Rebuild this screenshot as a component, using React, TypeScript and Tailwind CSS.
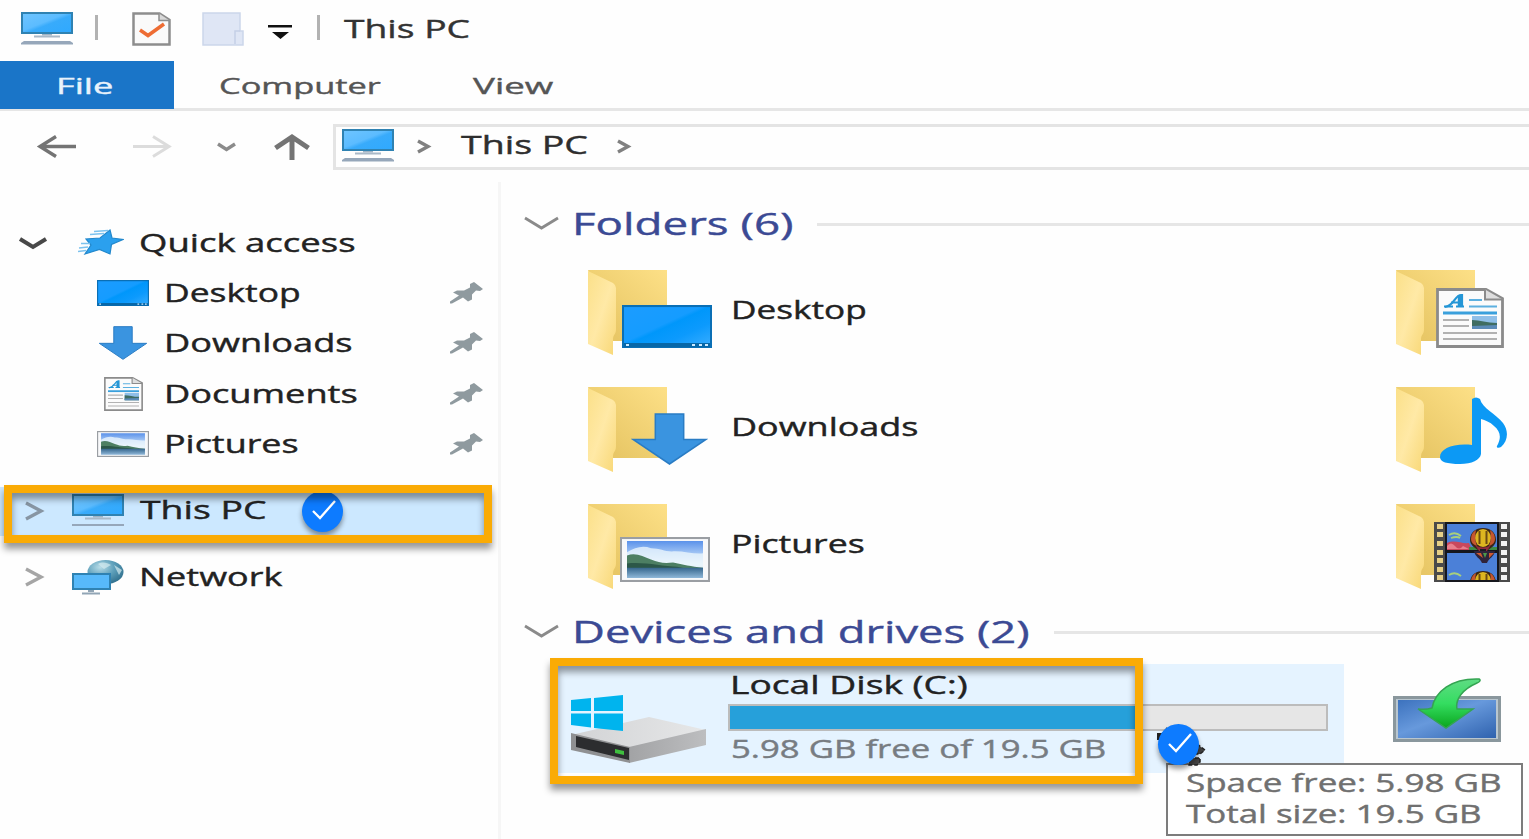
import { useLayoutEffect, useRef, type ReactNode } from "react";

type LabelProps = { text: string; width: number; className?: string };

/** Single line of wide-set text, stretched horizontally to fill its width. */
function Label({ text, width, className = "" }: LabelProps) {
  const ref = useRef<HTMLSpanElement>(null);
  useLayoutEffect(() => {
    const el = ref.current;
    if (!el) return;
    el.style.transform = `scaleX(${width / el.offsetWidth})`;
  }, [text, width]);
  return (
    <span className={`flex shrink-0 ${className}`} style={{ width }}>
      <span ref={ref} className="shrink-0 origin-left whitespace-nowrap [-webkit-text-stroke:0.4px]">
        {text}
      </span>
    </span>
  );
}

function MonitorIcon({ className = "", flat = false }: { className?: string; flat?: boolean }) {
  return (
    <svg viewBox="0 0 52 33" className={`h-[33px] w-[52px] shrink-0 ${className}`}>
      <defs>
        <linearGradient id="screen" x1="0" y1="0" x2="1" y2="1">
          <stop offset="0" stopColor="#6fc5ff" />
          <stop offset="0.45" stopColor="#5cbcff" />
          <stop offset="0.55" stopColor="#38abfb" />
          <stop offset="1" stopColor="#2fa9ff" />
        </linearGradient>
      </defs>
      <rect x="1" y="1" width="50" height="20" fill="url(#screen)" stroke="#2f82b2" strokeWidth="2" />
      <path d="M21 22h10v1.500H21z" fill="#9fb3c4" />
      <path d="M13 23.500h26v2H13z" fill="#a9b9c8" />
      <path d={flat ? "M0 30h52v2H0z" : "M3 29h46l3 2v1.500H0V31z"} fill="#96a7ba" />
    </svg>
  );
}

function DesktopIcon({ className }: { className: string }) {
  return (
    <svg viewBox="0 0 90 42" preserveAspectRatio="none" className={className}>
      <defs>
        <linearGradient id="desk" x1="0" y1="0" x2="1" y2="1">
          <stop offset="0" stopColor="#1c9cff" />
          <stop offset="0.45" stopColor="#159cff" />
          <stop offset="0.5" stopColor="#0097fb" />
          <stop offset="0.7" stopColor="#0c9afd" />
          <stop offset="1" stopColor="#3aaeff" />
        </linearGradient>
      </defs>
      <rect x="1" y="1" width="88" height="40" fill="url(#desk)" stroke="#0a6fb5" strokeWidth="2" />
      <path d="M2 37h86v4H2z" fill="#0767a8" />
      <path d="M4 38h3v2H4zM70 38h3v2h-3zM77 38h3v2h-3zM83 38h3v2h-3z" fill="#cdeaff" />
    </svg>
  );
}

function DownArrow({ className }: { className: string }) {
  return (
    <svg viewBox="0 0 76 51" preserveAspectRatio="none" className={className}>
      <path d="M24 1h28v25h22L38 50 2 26h22z" fill="#3a94e0" stroke="#2a7cc4" strokeWidth="1.500" />
    </svg>
  );
}

function DocumentIcon({ className }: { className: string }) {
  return (
    <svg viewBox="0 0 68 60" preserveAspectRatio="none" className={className}>
      <path d="M1.500 1.500H50l16.500 9V58.500h-65z" fill="#fbfbfb" stroke="#8b8b8b" strokeWidth="2.800" />
      <path d="M49 1.500v10h17.500" fill="#dedede" stroke="#8b8b8b" strokeWidth="2" />
      <path d="M9 19c9-1 10-12 16-12h1v11" fill="none" stroke="#2496d6" strokeWidth="2.200" />
      <path d="M24 7v11" stroke="#2496d6" strokeWidth="4.500" />
      <path d="M15 14.500h10M8 18.500h9M20 18.500h8" fill="none" stroke="#2496d6" strokeWidth="2" />
      <path d="M33 12h13M33 18.500h28" stroke="#5cb0e0" strokeWidth="2" />
      <path d="M7 25h54" stroke="#3aa0dc" strokeWidth="3.200" />
      <path d="M7 32h26M7 38h26M7 45h54M7 51h54" stroke="#b2b2b2" strokeWidth="1.800" />
      <path d="M36 28h25v13H36z" fill="#8fbfe8" />
      <path d="M36 32c8 0 15 3 25 3v6H36z" fill="#3f6d62" />
      <path d="M36 38l25-1v4H36z" fill="#5b8bb8" />
    </svg>
  );
}

function PictureIcon({ className }: { className: string }) {
  return (
    <svg viewBox="0 0 90 44" preserveAspectRatio="none" className={className}>
      <defs>
        <linearGradient id="sky" x1="0" y1="0" x2="0" y2="1">
          <stop offset="0" stopColor="#5b92ea" />
          <stop offset="0.35" stopColor="#a6c8f5" />
          <stop offset="0.6" stopColor="#e6f2fb" />
        </linearGradient>
        <linearGradient id="lake" x1="0" y1="0" x2="0" y2="1">
          <stop offset="0" stopColor="#35658c" />
          <stop offset="1" stopColor="#8fb7d8" />
        </linearGradient>
      </defs>
      <rect x="1" y="1" width="88" height="42" fill="#f7f8fa" stroke="#9a9ea3" strokeWidth="2" />
      <path d="M7 4h76v36H7z" fill="url(#sky)" />
      <path d="M7 15c8-5 16-7 24-4 10 0 14 4 24 3 10 0 20 3 28 2v12H7z" fill="#eaf5fc" opacity="0.8" />
      <path d="M7 18c9-3 16 1 24 4s12 4 22 3c10 2 18 4 30 5v2H7z" fill="#4d7f63" />
      <path d="M7 26c16-2 36 3 50 3l10 2H7z" fill="#2c5748" />
      <path d="M7 30h76v10H7z" fill="url(#lake)" />
    </svg>
  );
}

function MusicIcon({ className }: { className: string }) {
  return (
    <svg viewBox="0 0 68 68" className={className}>
      <path
        d="M32 2q4-3 8 0c2 9 16 15 23 24 6 8 5 18-2 24-2 1-5 1-4-1 5-9 3-15-3-20-4-4-9-6-13-7v35c-1 6-9 10-21 10C7 67 0 65 0 60c0-8 13-14 32-12z"
        fill="#0c99f5"
      />
    </svg>
  );
}

function Balloon({ x, y }: { x: number; y: number }) {
  return (
    <g transform={`translate(${x} ${y})`}>
      <path d="M-13 6c0-8 6-12 13-12s13 4 13 12c0 5-5 8-8 10H-5c-3-2-8-5-8-10z" fill="#3a2516" />
      <ellipse cx="0" cy="4" rx="8" ry="9" fill="#dcb520" />
      <path d="M-12 5q0-6 5-9-2 9 1 16-6-2-6-7zM12 5q0-6-5-9 2 9-1 16 6-2 6-7z" fill="#c4562f" />
      <path d="M-3.500-3v13M3.500-3v13" stroke="#6b4a12" strokeWidth="2" fill="none" />
      <path d="M-8 11q8 5 16 0l-4 6h-8z" fill="#8e2b3b" />
      <path d="M-3 15h6v5h-6z" fill="#1c1a22" />
    </g>
  );
}

function FilmIcon({ className }: { className: string }) {
  return (
    <svg viewBox="0 0 76 60" className={className}>
      <path d="M0 0h76v60H0z" fill="#4a4a4a" />
      <path d="M11 0h54v60H11z" fill="#15171d" />
      <path d="M13 2h50v26H13zM13 31h50v27H13z" fill="#4b80d8" />
      <path d="M13 21c8-4 14 1 22 0l3 7H13z" fill="#c9485c" />
      <path d="M13 24q4-5 8 0t8 0l6 3H13z" fill="#e87f8c" />
      <path d="M35 25h28v3H35z" fill="#3c8a45" />
      <path d="M15 13q6-4 12 1M17 16q6-2 9 0M15 53q6-4 12 1" stroke="#a8cf7c" strokeWidth="1.800" fill="none" />
      <Balloon x={49} y={12} />
      <path d="M40 29h21c-1 6-6 7-8 12h-5c-2-5-7-6-8-12z" fill="#30243a" />
      <path d="M42 31h5l2 5zM55 31h5l-5 5z" fill="#cf5a2f" />
      <path d="M49 31h4l-2 5z" fill="#4c9a4a" />
      <svg x="13" y="31" width="50" height="27" viewBox="13 31 50 27">
        <Balloon x={49} y={55} />
      </svg>
      {[2, 10, 19, 28, 36, 45, 53].map((y) => (
        <g key={y}>
          <path d={`M3 ${y}h6v5H3z`} fill="#e6cf86" />
          <path d={`M67 ${y}h6v5h-6z`} fill="#f2f2f2" />
        </g>
      ))}
    </svg>
  );
}

function Folder({ children }: { children: ReactNode }) {
  return (
    <div className="relative h-[86px] w-[126px] shrink-0">
      <svg viewBox="0 0 126 86" className="h-full w-full">
        <defs>
          <linearGradient id="back" x1="0" y1="1" x2="1" y2="0">
            <stop offset="0.2" stopColor="#e8c766" />
            <stop offset="1" stopColor="#fde087" />
          </linearGradient>
          <linearGradient id="flap" x1="0" y1="0" x2="1" y2="1">
            <stop offset="0" stopColor="#fbe089" />
            <stop offset="0.5" stopColor="#ffe9a6" />
            <stop offset="1" stopColor="#f8d775" />
          </linearGradient>
        </defs>
        <path d="M0 0h79v71H24z" fill="url(#back)" />
        <path d="M0 1l25 12q3 2 3 5v41c0 6-3 5-3 11v15L0 74z" fill="url(#flap)" />
      </svg>
      {children}
    </div>
  );
}

function StarIcon() {
  return (
    <svg viewBox="0 0 46 28" className="h-[28px] w-[46px] shrink-0">
      <path d="M32 1L34 9 45 10.500 33.500 15.500 32 25 21.500 20.500 7 25 13 16 8 10 22 9z" fill="#2ba0ee" stroke="#2388cc" strokeWidth="1.200" />
      <path d="M16 2.500l14-1M12 5.500l14-1M3 14.500h9M1 19l9-1M0 22.500l8-1" stroke="#7cc2ee" strokeWidth="1.400" />
    </svg>
  );
}

function PinIcon() {
  return (
    <svg viewBox="0 0 33 22" className="h-[22px] w-[33px] shrink-0">
      <path d="M20 2l4-2 9 7-3 2-4-.500-4 4v5l-4 2-5-4-11 6H0v-2l9-6-6-3 4-2h7l6-3z" fill="#8f9a9f" />
    </svg>
  );
}

function NetworkIcon() {
  return (
    <svg viewBox="0 0 52 35" className="h-[35px] w-[52px] shrink-0">
      <defs>
        <radialGradient id="globe" cx="0.35" cy="0.3" r="0.8">
          <stop offset="0" stopColor="#b9dde8" />
          <stop offset="0.5" stopColor="#5d9fba" />
          <stop offset="1" stopColor="#2b6a88" />
        </radialGradient>
      </defs>
      <ellipse cx="33.500" cy="12" rx="18" ry="12" fill="url(#globe)" />
      <path d="M26 4c5-3 9-1 13 1l-7 4zM42 5l8 5-3 5z" fill="#d4ebef" opacity="0.7" />
      <rect x="1" y="14" width="37" height="15" fill="#57b9fa" stroke="#2f82b2" strokeWidth="2" />
      <path d="M16 30h6v2h-6zM10 32.500h18v2H10z" fill="#91a5b5" />
    </svg>
  );
}

function DriveIcon() {
  return (
    <svg viewBox="0 0 136 70" className="h-[70px] w-[136px] shrink-0">
      <defs>
        <linearGradient id="top" x1="0" y1="0" x2="1" y2="0">
          <stop offset="0" stopColor="#d2d3d5" />
          <stop offset="1" stopColor="#e6e7e8" />
        </linearGradient>
        <linearGradient id="side" x1="0" y1="0" x2="1" y2="0">
          <stop offset="0" stopColor="#a2a3a5" />
          <stop offset="1" stopColor="#bdbec0" />
        </linearGradient>
      </defs>
      <path d="M0 40l78-18 57 13-75 22z" fill="url(#top)" />
      <path d="M58 52l77-18v16L58 68z" fill="url(#side)" />
      <path d="M0 38l59 14v16L0 55z" fill="#8f9092" />
      <path d="M5 41l53 12v12L5 52z" fill="#2c2d2f" />
      <path d="M44 54l9 2v4l-9-2z" fill="#3fbf3f" />
      <path d="M0 5l20-2v13H0zM23 3l29-3v16H23zM0 18.500h20v14L0 30zM23 18.500h29V36l-29-3z" fill="#00b4ee" />
    </svg>
  );
}

function InstallIcon() {
  return (
    <svg viewBox="0 0 108 64" className="h-[64px] w-[108px] shrink-0">
      <defs>
        <linearGradient id="panel" x1="0" y1="0" x2="1" y2="1">
          <stop offset="0" stopColor="#3c72be" />
          <stop offset="0.45" stopColor="#6799dc" />
          <stop offset="1" stopColor="#2f62ae" />
        </linearGradient>
        <linearGradient id="green" x1="0" y1="0" x2="0" y2="1">
          <stop offset="0" stopColor="#5fdc84" />
          <stop offset="0.5" stopColor="#34dd60" />
          <stop offset="1" stopColor="#0aa61e" />
        </linearGradient>
      </defs>
      <rect x="1.500" y="19.500" width="105" height="43" fill="#b9c6cf" stroke="#8a979d" strokeWidth="3" />
      <rect x="5" y="22" width="98" height="38" fill="url(#panel)" />
      <path d="M86 1c2 1 1 3-2 4-14 6-22 16-20 26h16L53 50 25 31q8 1 14-1C42 14 58 0 86 1z" fill="url(#green)" stroke="#35a452" strokeWidth="1.500" />
    </svg>
  );
}

function Chevron({ d, className, stroke, width }: { d: string; className: string; stroke: string; width: number }) {
  return (
    <svg className={`shrink-0 overflow-visible ${className}`} fill="none">
      <path d={d} stroke={stroke} strokeWidth={width} />
    </svg>
  );
}

function CheckBadge({ className }: { className: string }) {
  return (
    <div className={`absolute h-[41px] w-[41px] rounded-full bg-[#0d7bff] shadow-[0_4px_5px_rgba(0,0,0,0.4)] ${className}`}>
      <svg viewBox="0 0 41 41" className="h-full w-full" fill="none">
        <path d="M11 20l7 7 15-17" stroke="#fff" strokeWidth="2.300" />
      </svg>
    </div>
  );
}

function TitleBar() {
  return (
    <div className="flex h-[61px] shrink-0 items-start pt-[12px] pl-[21px]">
      <MonitorIcon />
      <div className="mt-[3px] ml-[22px] h-[25px] w-[3px] bg-[#b2b2b2]" />
      <svg viewBox="0 0 39 34" className="ml-[34px] h-[34px] w-[39px]">
        <path d="M1.500 1.500h26l10 6.500v24.500h-36z" fill="#fafafa" stroke="#8d8d8d" strokeWidth="2.500" />
        <path d="M27 1.500v7h10.500" fill="#d9d9d9" stroke="#8d8d8d" strokeWidth="1.500" />
        <path d="M8 18l8 5.500L32 12" fill="none" stroke="#ee6c33" strokeWidth="3.500" />
      </svg>
      <svg viewBox="0 0 42 34" className="ml-[31px] h-[34px] w-[42px]">
        <path d="M1 1h37v18h3v14H1z" fill="#dfe6f5" stroke="#ccd6ea" strokeWidth="1.500" />
        <path d="M38 19h-5v13" fill="none" stroke="#c5d0e6" strokeWidth="1.500" />
      </svg>
      <svg viewBox="0 0 24 14" className="mt-[13px] ml-[24px] h-[14px] w-[24px]">
        <path d="M0 0h24v2.500H0zM4 7h17l-8.500 7z" fill="#111" />
      </svg>
      <div className="mt-[3px] ml-[25px] h-[25px] w-[3px] bg-[#b2b2b2]" />
      <Label text="This PC" width={126} className="ml-[24px] text-[26px] leading-[33px] text-[#333]" />
    </div>
  );
}

function Tabs() {
  return (
    <div className="flex h-[50px] shrink-0 border-b-[3px] border-[#e6e6e6] text-[22.500px] leading-[49px] text-[#555]">
      <div className="-mb-px flex h-[48px] w-[174px] bg-[#1a75c8] pl-[56px] text-[#e8f2fb]">
        <Label text="File" width={58} />
      </div>
      <Label text="Computer" width={162} className="ml-[45px]" />
      <Label text="View" width={80} className="ml-[92px]" />
    </div>
  );
}

function AddressRow() {
  return (
    <div className="flex h-[71px] shrink-0 pt-[13px]">
      <div className="flex h-[46px] w-[333px] shrink-0 pl-[38px]">
        <Chevron d="M38 11.500H2M18 1.500L2 11.500L18 21.500" className="mt-[11px] h-[22px] w-[38px]" stroke="#747474" width={3.4} />
        <Chevron d="M0 11.500H36M20 1.500L36 11.500L20 21.500" className="mt-[11px] ml-[57px] h-[22px] w-[38px]" stroke="#dcdcdc" width={3} />
        <Chevron d="M1 1L9.500 6.500L18 1" className="mt-[19px] ml-[46px] h-[8px] w-[19px]" stroke="#8b8b8b" width={3.4} />
        <Chevron d="M18 26V3M1.500 14L18 3L34.500 14" className="mt-[10px] ml-[38px] h-[26px] w-[36px]" stroke="#747474" width={5} />
      </div>
      <div className="flex h-[46px] flex-1 border-y-[3px] border-l-[3px] border-[#e4e4e4] pt-[2px] pl-[6px]">
        <MonitorIcon />
        <Chevron d="M1 1L11 6.500L1 12" className="mt-[11px] ml-[23px] h-[13px] w-[12px]" stroke="#808080" width={3.4} />
        <Label text="This PC" width={127} className="ml-[32px] text-[26px] leading-[30px] text-[#2e2e2e]" />
        <Chevron d="M1 1L11 6.500L1 12" className="mt-[11px] ml-[29px] h-[13px] w-[12px]" stroke="#808080" width={3.4} />
      </div>
    </div>
  );
}

function PinnedRow({ icon, text, width }: { icon: ReactNode; text: string; width: number }) {
  return (
    <div className="flex h-[50.300px] items-center pl-[97px]">
      <div className="flex w-[52px] shrink-0 justify-center">{icon}</div>
      <Label text={text} width={width} className="mb-[2px] ml-[15px]" />
      <div className="mr-[15px] ml-auto flex">
        <PinIcon />
      </div>
    </div>
  );
}

function Sidebar() {
  return (
    <div className="relative w-[501px] shrink-0 border-r-[3px] border-[#f6f6f6] pt-[35.500px] text-[25px] leading-[34px] text-[#222]">
      <div className="flex h-[50.300px] items-center pl-[19px]">
        <Chevron d="M1 1L14 9L27 1" className="h-[10px] w-[28px]" stroke="#484848" width={4} />
        <div className="ml-[31px] flex">
          <StarIcon />
        </div>
        <Label text="Quick access" width={216} className="mb-[2px] ml-[15px]" />
      </div>
      <PinnedRow text="Desktop" width={136} icon={<DesktopIcon className="h-[26px] w-[52px]" />} />
      <PinnedRow text="Downloads" width={188} icon={<DownArrow className="h-[34px] w-[50px]" />} />
      <PinnedRow text="Documents" width={194} icon={<DocumentIcon className="h-[34px] w-[39px]" />} />
      <PinnedRow text="Pictures" width={135} icon={<PictureIcon className="h-[26px] w-[52px]" />} />
      <div className="mt-[18px] flex h-[49px] w-[488px] items-center bg-[#cce8ff] pb-px pl-[25px]">
        <Chevron d="M1 1L16 9L1 17" className="h-[18px] w-[17px]" stroke="#8795a3" width={3.4} />
        <MonitorIcon flat className="ml-[30px]" />
        <Label text="This PC" width={127} className="mb-[3px] ml-[16px]" />
      </div>
      <CheckBadge className="top-[309px] left-[302px]" />
      <div className="mt-[17px] flex h-[49px] items-center pl-[25px]">
        <Chevron d="M1 1L16 9L1 17" className="h-[18px] w-[17px]" stroke="#a5a5a5" width={3.4} />
        <div className="ml-[30px] flex">
          <NetworkIcon />
        </div>
        <Label text="Network" width={144} className="mb-[2px] ml-[15px]" />
      </div>
      <div className="absolute top-[303px] left-[4px] h-[58px] w-[488px] border-8 border-[#faab05] shadow-[0_6px_7px_rgba(0,0,0,0.4),inset_0_6px_7px_rgba(0,0,0,0.4)]" />
    </div>
  );
}

function GroupHeader({ text, width }: { text: string; width: number }) {
  return (
    <div className="flex h-[42px] items-center pl-[23px] text-[31px] leading-[42px] text-[#3b4a94]">
      <Chevron d="M1 1L17.500 11L34 1" className="h-[12px] w-[35px]" stroke="#8a8a8a" width={2.8} />
      <Label text={text} width={width} className="ml-[13px]" />
      <div className="mt-[2px] ml-[24px] h-[3px] flex-1 bg-[#e6e6e6]" />
    </div>
  );
}

function FolderTile({ icon, text, width }: { icon: ReactNode; text?: string; width?: number }) {
  return (
    <div className="flex h-[117px] items-start pt-[17px]">
      <Folder>{icon}</Folder>
      {text && width ? <Label text={text} width={width} className="mt-[22px] ml-[17px]" /> : null}
    </div>
  );
}

function Content() {
  return (
    <div className="relative min-w-0 flex-1 pt-[20px] text-[25px] leading-[34px] text-[#222]">
      <GroupHeader text="Folders (6)" width={221} />
      <div className="grid grid-cols-[808px_126px] pt-[9px] pl-[87px]">
        <FolderTile text="Desktop" width={135} icon={<DesktopIcon className="absolute top-[35px] left-[34px] h-[43px] w-[90px]" />} />
        <FolderTile icon={<DocumentIcon className="absolute top-[18px] left-[40px] h-[60px] w-[68px]" />} />
        <FolderTile text="Downloads" width={187} icon={<DownArrow className="absolute top-[26px] left-[43px] h-[52px] w-[77px]" />} />
        <FolderTile icon={<MusicIcon className="absolute top-[10px] left-[44px] h-[68px] w-[68px]" />} />
        <FolderTile text="Pictures" width={134} icon={<PictureIcon className="absolute top-[33px] left-[32px] h-[45px] w-[90px]" />} />
        <FolderTile icon={<FilmIcon className="absolute top-[18px] left-[38px] h-[60px] w-[76px]" />} />
      </div>
      <div className="pt-[6px]">
        <GroupHeader text="Devices and drives (2)" width={458} />
      </div>
      <div className="flex pt-[12px] pl-[50px]">
        <div className="flex h-[109px] w-[793px] bg-[#e5f3ff] pl-[20px]">
          <div className="pt-[31px]">
            <DriveIcon />
          </div>
          <div className="ml-[21px] flex flex-col pt-[3px]">
            <Label text="Local Disk (C:)" width={238} className="ml-[2px]" />
            <div className="mt-[3px] flex h-[27px] w-[600px] border-2 border-[#bcbcbc] bg-[#e6e6e6]">
              <div className="w-[409px] bg-[#26a0da]" />
            </div>
            <Label text="5.98 GB free of 19.5 GB" width={375} className="ml-[3px] text-[#777c82]" />
          </div>
        </div>
        <div className="pt-[14px] pl-[49px]">
          <InstallIcon />
        </div>
      </div>
      <div className="absolute top-[476px] left-[49px] h-[126px] w-[593px] border-8 border-[#faab05] shadow-[0_6px_7px_rgba(0,0,0,0.4),inset_0_6px_7px_rgba(0,0,0,0.4)]" />
      <div className="absolute top-[581px] left-[665px] flex h-[73px] w-[357px] flex-col border-2 border-[#7c7c7c] bg-white pt-px pl-[18px] text-[#707070]">
        <Label text="Space free: 5.98 GB" width={315} className="leading-[32px]" />
        <Label text="Total size: 19.5 GB" width={296} className="-mt-px leading-[32px]" />
      </div>
      <svg viewBox="0 0 50 40" className="absolute top-[544px] left-[656px] h-[40px] w-[50px]">
        <path d="M0 7h5l5-6v9H5v4H0z" fill="#222" />
        <path d="M40 18l8 6-5 4h-4zM32 32h11v4l-3 3h-8z" fill="#444" stroke="#222" strokeWidth="1.500" strokeDasharray="4 2" />
      </svg>
      <CheckBadge className="top-[542px] left-[657px]" />
    </div>
  );
}

export default function App() {
  return (
    <div className="flex h-[839px] w-[1529px] flex-col overflow-hidden bg-[#fefefe] font-['Open_Sans','Noto_Sans',sans-serif]">
      <TitleBar />
      <Tabs />
      <AddressRow />
      <div className="flex min-h-0 flex-1">
        <Sidebar />
        <Content />
      </div>
    </div>
  );
}
